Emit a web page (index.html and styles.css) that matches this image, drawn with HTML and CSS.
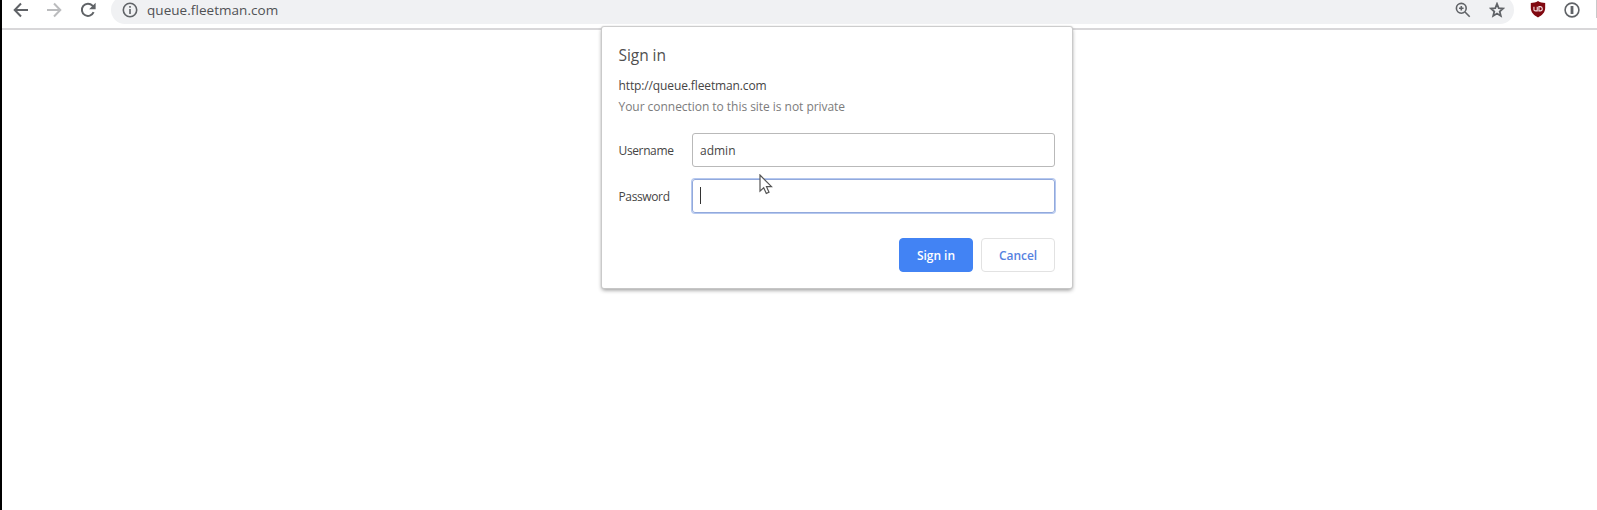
FILE: index.html
```html
<!DOCTYPE html>
<html lang="en">
<head>
<meta charset="utf-8">
<title>queue.fleetman.com</title>
<link rel="stylesheet" href="styles.css">
</head>
<body>
<div class="browser">
  <header class="toolbar">
    <nav class="nav">
      <svg class="icon" width="16" height="16" viewBox="0 0 16 16"><path d="M15 8H2.2M8 1.5 1.7 8 8 14.5"/></svg>
      <svg class="icon faded" width="16" height="16" viewBox="0 0 16 16"><path d="M1 8h12.8M8 1.5 14.3 8 8 14.5"/></svg>
      <svg class="icon" width="16" height="16" viewBox="0 0 16 16"><path d="M13.6 10.2A6.1 6.1 0 1 1 12.5 3.7L14 5.2"/><path class="solid" d="M15.6.8v6.5H9.1z"/></svg>
    </nav>
    <div class="omnibox">
      <svg class="icon thin" width="16" height="16" viewBox="0 0 16 16"><circle cx="8" cy="8" r="6.7"/><path d="M8 7v5M8 4v1.7"/></svg>
      <span class="url">queue.fleetman.com</span>
      <svg class="icon thin magnifier" width="16" height="16" viewBox="0 0 16 16"><circle cx="6.3" cy="6.3" r="4.9"/><path d="m10 10 4.7 4.7M6.3 4v4.6M4 6.3h4.6"/></svg>
      <svg class="icon star" width="16" height="16" viewBox="0 0 16 16"><path d="m8 1.900 1.700 4.300 4.400.3-3.400 3 1.100 4.400L8 11.600l-3.800 2.300 1.100-4.400-3.400-3 4.400-.3z"/></svg>
    </div>
    <div class="extensions">
      <svg class="shield" width="16" height="17" viewBox="0 0 16 18"><path fill="#800810" d="M8 0c2.300 1.500 4.800 2 7.600 2.100v5.400c0 4.700-3.300 7.800-7.600 10C3.700 15.300.4 12.200.4 7.500V2.100C3.200 2 5.700 1.500 8 0z"/><path fill="none" stroke="#f4dfe1" stroke-width="1.200" d="M3.700 6v3.200q0 1.300 1.700 1.300h1.800V6M9 6v4.500h1.500q2 0 2-2.200T10.500 6z"/></svg>
      <svg class="icon thin" width="16" height="16" viewBox="0 0 16 16"><circle cx="8" cy="8" r="6.900"/><path class="bar" d="M8 4v8"/></svg>
      <span class="separator"></span>
    </div>
  </header>
  <main class="page">
    <form class="dialog">
      <h1 class="title">Sign in</h1>
      <p class="origin">http://queue.fleetman.com</p>
      <p class="warning">Your connection to this site is not private</p>
      <div class="row"><span class="label username">Username</span><div class="field"><span class="value">admin</span></div></div>
      <div class="row"><span class="label password">Password</span><div class="field focused"><span class="caret"></span></div></div>
      <div class="actions">
        <button class="button primary" type="button">Sign in</button>
        <button class="button" type="button">Cancel</button>
      </div>
      <svg class="pointer" width="14" height="21" viewBox="0 0 14 21"><path d="M1 1v16.200l3.700-3.500 2.600 5.700 2.700-1.200-2.500-5.500h5z"/></svg>
    </form>
  </main>
</div>
</body>
</html>
```
FILE: styles.css
```css
* { box-sizing: border-box; }
body { margin: 0; background: #fff; font-family: "Open Sans", "Noto Sans", sans-serif; color: #454545; }
.browser { height: 510px; border-left: 2px solid #000; overflow: hidden; position: relative; display: flex; flex-direction: column; }
.toolbar { height: 30px; flex: none; display: flex; align-items: flex-start; border-bottom: 2px solid #d8d7d9; }
.nav { display: flex; gap: 17.5px; padding: 2px 14px 0 10.5px; width: 109px; }
.icon { fill: none; stroke: #606367; stroke-width: 2; flex: none; }
.icon.faded { stroke: #bbbcbe; }
.icon.thin { stroke-width: 1.6; }
.icon.star { stroke-width: 1.8; }
.icon .solid { fill: #606367; stroke: none; }
.icon .bar { stroke-width: 2.800; }
.omnibox { width: 1403px; height: 28px; margin-top: -4px; background: #f0f1f3; border-radius: 14px; display: flex; align-items: center; padding: 0 9px 0 11px; gap: 18px; }
.url { font-size: 13.5px; line-height: 18px; margin-left: -9px; letter-spacing: .05px; color: #505255; }
.magnifier { margin-left: auto; }
.extensions { display: flex; padding-left: 16px; gap: 18px; align-items: flex-start; }
.extensions .icon { margin-top: 2px; }
.shield { margin-top: 1px; }
.separator { width: 1px; height: 18px; background: #c9c9cb; margin-left: -2px; }
.page { flex: 1; }
.dialog { position: absolute; left: 600px; top: 27px; width: 470px; height: 261px; padding: 17px 17px 0 16.5px; background: #fff; border-radius: 2px; box-shadow: 0 0 1px 1px #c9c9c9, 0 2px 4px rgba(0,0,0,.45); }
.title { margin: 0; font-size: 15.5px; font-weight: 400; line-height: 22px; letter-spacing: -.05px; color: #505050; }
.origin { margin: 10px 0 0; font-size: 12px; line-height: 20px; letter-spacing: -.12px; }
.warning { margin: 1px 0 16px; font-size: 12px; line-height: 20px; letter-spacing: -.04px; color: #7c7c7c; }
.row { display: flex; align-items: center; height: 34px; margin-bottom: 12px; }
.label { width: 73.5px; font-size: 12px; letter-spacing: -.37px; }
.field { flex: 1; height: 34px; border: 1px solid #b9b9b9; border-radius: 3px; display: flex; align-items: center; padding-left: 7px; font-size: 12px; }
.focused { border-color: #92a9dc; box-shadow: 0 0 0 1px #b5c8ef; }
.caret { width: 1px; height: 17px; background: #333; margin-top: -2px; }
.actions { display: flex; justify-content: flex-end; gap: 8px; margin-top: 25px; }
.button { width: 74px; height: 34px; border: 1px solid #e2e2e2; border-radius: 4px; padding: 0; background: #fff; color: #5682df; font: 600 12px "Open Sans", "Noto Sans", sans-serif; letter-spacing: -.05px; }
.primary { background: #4283f4; border-color: #4283f4; color: #fff; }
.pointer { position: absolute; left: 157px; top: 147px; }
.pointer path { fill: #fff; stroke: #555; stroke-width: 1.200; }
```
